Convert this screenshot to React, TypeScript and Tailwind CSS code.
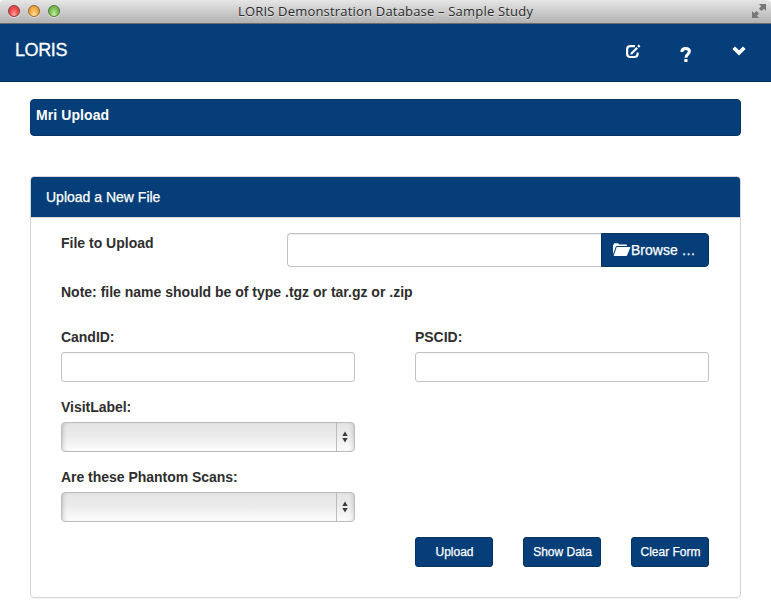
import type { ReactNode } from "react";

function TrafficLight({ tone }: { tone: string }) {
  return (
    <span
      className={`block h-3 w-3 rounded-full border shadow-[0_1px_0_rgba(255,255,255,0.5)] ${tone}`}
    />
  );
}

function TitleBar() {
  return (
    <div className="flex h-6 items-center justify-between rounded-t-[4px] border-b border-[#6b6b6b] bg-linear-to-b from-[#e6e6e6] to-[#b2b2b2] pl-2 pr-1">
      <div className="flex w-[226px] gap-2 pb-px">
        <TrafficLight tone="border-[#8e3a38] bg-[radial-gradient(ellipse_at_50%_90%,#ffaaa5_0%,#f2504f_50%,#c93a3c_100%)]" />
        <TrafficLight tone="border-[#94692f] bg-[radial-gradient(ellipse_at_50%_90%,#ffe49a_0%,#f5b046_50%,#cc8430_100%)]" />
        <TrafficLight tone="border-[#4c7a36] bg-[radial-gradient(ellipse_at_50%_90%,#cdf0a4_0%,#83c55c_50%,#5a9940_100%)]" />
      </div>
      <h1 className="whitespace-nowrap font-['Open_Sans','Noto_Sans',sans-serif] text-[13px] leading-[23px] tracking-[0.19px] text-[#2b2b2b] [text-shadow:0_1px_0_rgba(255,255,255,0.5)]">
        LORIS Demonstration Database – Sample Study
      </h1>
      <div className="flex w-[230px] justify-end">
        <svg width="15" height="15" viewBox="0 0 15 15" fill="#777">
          <path d="M7 0h7v7l-2.200-2.200L9.500 7 7 4.500 9.200 2.200z" />
          <path d="M7 14H0V7l2.200 2.200L4.500 7 7 9.500 4.800 11.800z" />
        </svg>
      </div>
    </div>
  );
}

function NavBar() {
  return (
    <nav className="flex h-[58px] items-start justify-between border-b border-[#03305e] bg-[#053e78] pl-[15px] pr-[25px] text-white">
      <span className="mt-4 text-[18px] leading-5 tracking-[-0.4px] [-webkit-text-stroke:0.3px_#fff]">LORIS</span>
      <div className="flex items-start">
        <svg className="mt-5 mr-[39px]" width="16" height="16" viewBox="0 0 16 16" fill="none" stroke="#fff">
          <path d="M10 2.200H5.500Q2.100 2.200 2.100 5.500v4.200q0 3.300 3.400 3.300h3.700q3.400 0 3.400-3.300V8.500" strokeWidth="2.200" />
          <path d="M6.500 9.500 12.200 3.800" strokeWidth="2.200" />
          <path d="M13.100 2.900 14.600 1.400" strokeWidth="2.400" />
          <path d="M5.300 10.700 6 8l2 2z" fill="#fff" stroke="none" />
        </svg>
        <svg className="mt-[23px] mr-[40px]" width="12" height="16" viewBox="0 0 12 16" fill="none" stroke="#fff" strokeWidth="3">
          <path d="M1.900 5C1.900 2.800 3.500 1.600 5.700 1.600S9.400 2.800 9.400 4.600C9.400 7.200 5.900 7 5.900 10.800" />
          <path d="M5.900 12v3" strokeWidth="3.200" />
        </svg>
        <svg className="mt-[22px]" width="14" height="10" viewBox="0 0 14 10" fill="#fff">
          <path d="M0.400 3 3 0.400 7 4.300l4-3.900L13.600 3 7 9.500z" />
        </svg>
      </div>
    </nav>
  );
}

function Field({ label, children }: { label: string; children: ReactNode }) {
  return (
    <label className="block h-[70px] w-[294px]">
      <span className="mb-[5px] block whitespace-nowrap font-bold leading-5 tracking-[-0.03px]">{label}</span>
      {children}
    </label>
  );
}

function TextInput() {
  return (
    <input className="block h-[30px] w-full rounded-[3px] border border-[#c3c3c3] bg-white px-2 shadow-[inset_0_1px_1px_rgba(0,0,0,0.04)] outline-none" />
  );
}

function SelectBox() {
  return (
    <div className="flex h-[30px] w-full justify-end rounded-[4px] border border-[#bcbcbc] bg-linear-to-b from-[#e4e4e4] via-[#ececec] to-[#fdfdfd] shadow-[inset_4px_0_4px_-3px_rgba(0,0,0,0.18),inset_-4px_0_4px_-3px_rgba(0,0,0,0.15)]">
      <div className="flex w-[18px] items-center border-l border-[#bcbcbc] pl-[5px]">
        <svg width="6" height="12" viewBox="0 0 6 12" fill="#3d3d3d">
          <path d="M0.300 5 3 0.600 5.700 5zM0.300 7 3 11.400 5.700 7z" />
        </svg>
      </div>
    </div>
  );
}

function ActionButton({ children }: { children: ReactNode }) {
  return (
    <button className="h-[30px] w-[78px] whitespace-nowrap rounded-[3px] border border-[#04325f] bg-[#053e78] pl-px text-[12px] leading-[18px] text-white [-webkit-text-stroke:0.25px_#fff]">
      {children}
    </button>
  );
}

export default function App() {
  return (
    <div className="h-[610px] w-[771px] overflow-hidden bg-white font-['Liberation_Sans',Arial,sans-serif] text-[14px] text-[#2e2e2e]">
      <TitleBar />
      <NavBar />
      <main className="px-[30px] pt-[17px]">
        <div className="h-[37px] rounded-[4px] border border-[#04366a] bg-[#053e78] pl-[5px] pt-[5px] font-bold leading-5 tracking-[0.08px] text-white">
          Mri Upload
        </div>
        <section className="mt-[40px] h-[422px] rounded-[4px] border border-[#d6d6d6] shadow-[0_1px_1px_rgba(0,0,0,0.05)]">
          <header className="h-[41px] rounded-t-[3px] border-b border-[#d6d6d6] bg-[#053e78] pl-[15px] pt-2.5 leading-5 text-white [-webkit-text-stroke:0.25px_#fff]">
            Upload a New File
          </header>
          <div className="pl-[30px] pr-[31px] pt-[15px]">
            <div className="flex h-[49px]">
              <span className="w-[226px] font-bold leading-5">File to Upload</span>
              <input className="h-[34px] w-[314px] rounded-l-[4px] border border-r-0 border-[#c3c3c3] bg-white px-3 shadow-[inset_0_1px_1px_rgba(0,0,0,0.08)] outline-none" />
              <button className="flex h-[34px] w-[108px] items-center whitespace-nowrap rounded-r-[4px] border border-[#04325f] bg-[#053e78] pl-[11px] text-white [-webkit-text-stroke:0.25px_#fff]">
                <svg width="18" height="14" viewBox="0 0 18 14" fill="#fff">
                  <path d="M0 11.500V2.200Q0 1.500 0.800 1.500V1Q0.800 0.300 1.500 0.300H5Q5.700 0.300 5.700 1v0.500h7.500q0.800 0 0.800 0.800v0.700H3.800Q3 3 2.700 3.800z" />
                  <path d="M4.200 3.900H17.500L14.200 12.200Q13.800 13 13 13H1Q0.600 13 0.800 12.400L3.500 4.400Q3.700 3.900 4.200 3.900z" />
                </svg>
                Browse …
              </button>
            </div>
            <p className="h-[45px] font-bold leading-5">Note: file name should be of type .tgz or tar.gz or .zip</p>
            <div className="flex justify-between">
              <Field label="CandID:">
                <TextInput />
              </Field>
              <Field label="PSCID:">
                <TextInput />
              </Field>
            </div>
            <Field label="VisitLabel:">
              <SelectBox />
            </Field>
            <Field label="Are these Phantom Scans:">
              <SelectBox />
            </Field>
            <div className="flex justify-end gap-[30px]">
              <ActionButton>Upload</ActionButton>
              <ActionButton>Show Data</ActionButton>
              <ActionButton>Clear Form</ActionButton>
            </div>
          </div>
        </section>
      </main>
    </div>
  );
}
